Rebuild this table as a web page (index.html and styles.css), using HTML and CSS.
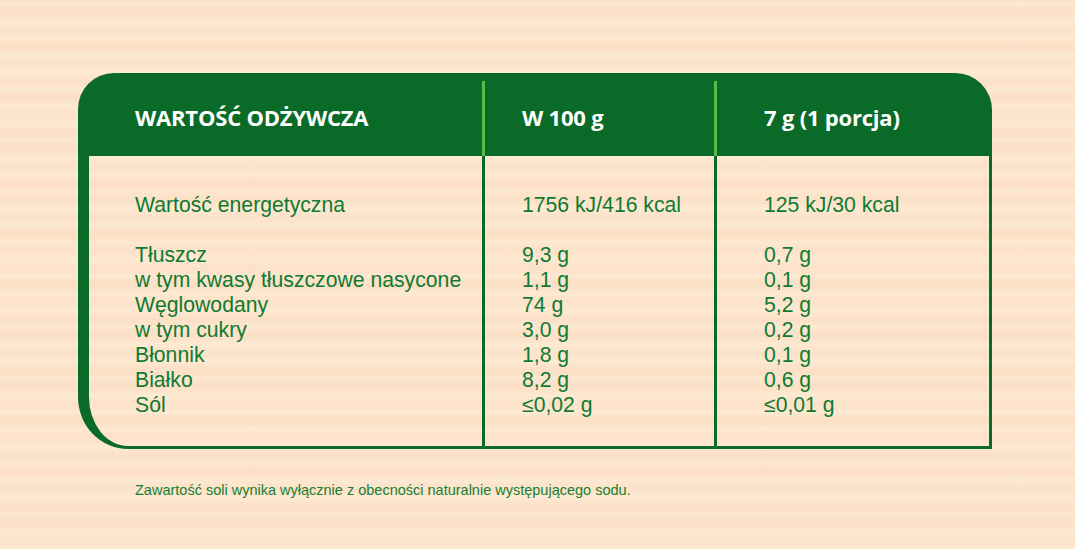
FILE: index.html
```html
<!DOCTYPE html>
<html lang="pl">
<head>
<meta charset="utf-8">
<title>Wartość odżywcza</title>
<link rel="stylesheet" href="styles.css">
</head>
<body>
<div class="page">
  <div class="card">
    <div class="head">
      <div class="hcell c1">WARTOŚĆ ODŻYWCZA</div>
      <div class="hcell c2">W 100 g</div>
      <div class="hcell c3">7 g (1 porcja)</div>
    </div>
    <div class="body">
      <div class="bcell c1">
        <div class="row">Wartość energetyczna</div>
        <div class="row gap"></div>
        <div class="row">Tłuszcz</div>
        <div class="row">w tym kwasy tłuszczowe nasycone</div>
        <div class="row">Węglowodany</div>
        <div class="row">w tym cukry</div>
        <div class="row">Błonnik</div>
        <div class="row">Białko</div>
        <div class="row">Sól</div>
      </div>
      <div class="bcell c2">
        <div class="row">1756 kJ/416 kcal</div>
        <div class="row gap"></div>
        <div class="row">9,3 g</div>
        <div class="row">1,1 g</div>
        <div class="row">74 g</div>
        <div class="row">3,0 g</div>
        <div class="row">1,8 g</div>
        <div class="row">8,2 g</div>
        <div class="row">≤0,02 g</div>
      </div>
      <div class="bcell c3">
        <div class="row">125 kJ/30 kcal</div>
        <div class="row gap"></div>
        <div class="row">0,7 g</div>
        <div class="row">0,1 g</div>
        <div class="row">5,2 g</div>
        <div class="row">0,2 g</div>
        <div class="row">0,1 g</div>
        <div class="row">0,6 g</div>
        <div class="row">≤0,01 g</div>
      </div>
    </div>
  </div>
  <p class="note">Zawartość soli wynika wyłącznie z obecności naturalnie występującego sodu.</p>
</div>
</body>
</html>
```

FILE: styles.css
```css
html, body {
  margin: 0;
  padding: 0;
}
body {
  width: 1075px;
  height: 549px;
  overflow: hidden;
  background-color: #fce1c8;
  background-image:
    repeating-linear-gradient(180deg, rgba(255,244,224,0) 0px, rgba(255,244,224,0.35) 4px, rgba(255,244,224,0) 9px, rgba(248,212,184,0.18) 13px, rgba(255,244,224,0) 17px),
    repeating-linear-gradient(180deg, rgba(255,238,216,0) 0px, rgba(255,238,216,0.35) 23px, rgba(255,238,216,0) 47px);
  font-family: "Liberation Sans", Arial, sans-serif;
}
.page {
  padding: 73px 0 0 78px;
}
.card {
  width: 914px;
}
.head {
  display: grid;
  grid-template-columns: 404px 232px 278px;
  height: 83px;
  padding-top: 8px;
  box-sizing: border-box;
  background: #0a6a27;
  border-radius: 36px 37px 0 0;
}
.hcell {
  display: flex;
  align-items: center;
  padding-bottom: 3px;
  color: #ffffff;
  font-family: "Open Sans", "Noto Sans", sans-serif;
  font-weight: 700;
  font-size: 22px;
  letter-spacing: -0.2px;
}
.hcell.c1 { padding-left: 57px; }
.hcell.c2 { border-left: 3px solid #5cb94b; padding-left: 37px; }
.hcell.c3 { border-left: 3px solid #5cb94b; padding-left: 47px; }

.body {
  display: grid;
  grid-template-columns: 393px 232px 275px;
  height: 293px;
  box-sizing: border-box;
  border-left: 11px solid #0a6a27;
  border-right: 3px solid #0a6a27;
  border-bottom: 3px solid #0a6a27;
  border-bottom-left-radius: 50px 52px;
}
.bcell {
  padding-top: 36px;
  color: #0f7a30;
  font-size: 21.2px;
  line-height: 25px;
}
.bcell.c1 { padding-left: 46px; }
.bcell.c2 { border-left: 3px solid #0a6a27; padding-left: 37px; }
.bcell.c3 { border-left: 3px solid #0a6a27; padding-left: 47px; }
.row { height: 25px; white-space: nowrap; }

.note {
  margin: 33px 0 0 57px;
  color: #168030;
  font-size: 14.5px;
  line-height: 16px;
}
```
